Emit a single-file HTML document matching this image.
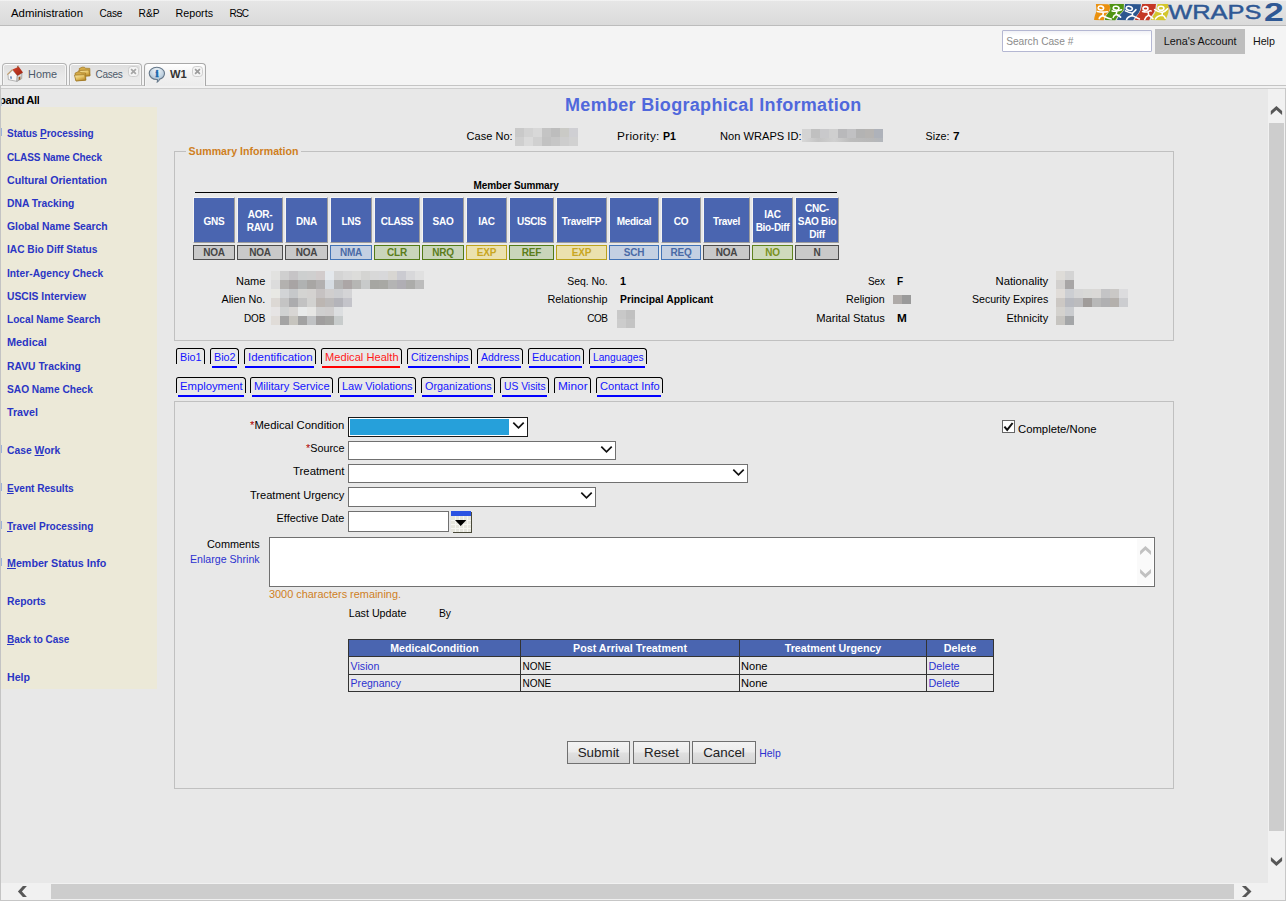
<!DOCTYPE html>
<html lang="en"><head><meta charset="utf-8"><title>Member Biographical Information</title>
<style>
html,body{margin:0;padding:0}
body{width:1286px;height:901px;overflow:hidden;background:#f4f4f4;font-family:'Liberation Sans', sans-serif;position:relative;color:#000}
.t{position:absolute;white-space:pre;line-height:16px;text-decoration:none;display:block}
.abs{position:absolute}
a{text-decoration:none}
u{text-decoration:underline;text-underline-offset:1px}
#menubar{position:absolute;left:0;top:0;width:1286px;height:25px;background:linear-gradient(#f7f7f7 0,#e6e6e6 1.5px,#e2e2e2 40%,#dadada 100%);border-bottom:1px solid #bcbcbc}
#toolbar{position:absolute;left:0;top:26px;width:1286px;height:59px;background:#f4f4f4}
.tab{position:absolute;top:63px;height:22px;border:1px solid #b4b4b4;border-bottom:none;border-radius:4px 4px 0 0;background:linear-gradient(#dedede,#e9e9e9 60%,#ececec);box-shadow:inset 0 1px 0 #fff,inset 1px 0 0 #f4f4f4,inset -1px 0 0 #f4f4f4;box-sizing:border-box}
.tab.on{background:linear-gradient(#ffffff,#f2f2f2 45%,#ececec);height:23px;border-color:#a8a8a8}
#panel{position:absolute;left:0;top:85px;width:1286px;height:816px;background:#e8e8e8;border-top:1px solid #c4c4c4;box-sizing:border-box}
#panel:before{content:"";position:absolute;left:0;top:0;width:1286px;height:2px;background:#f1f1f1;border-bottom:1px solid #cdcdcd}
#side{position:absolute;left:1px;top:107px;width:156px;height:582px;background:#ece9d8}
.hc{position:absolute;top:197px;height:46px;padding-top:2px;letter-spacing:-.3px;box-sizing:border-box;background:#4a65b0;border:1px solid;border-color:#f4f4f4 #9c9c9c #9c9c9c #f4f4f4;color:#fff;font-weight:700;font-size:10px;line-height:13px;display:flex;align-items:center;justify-content:center;text-align:center}
.sc{position:absolute;top:245px;height:15px;box-sizing:border-box;border:1px solid;font-weight:700;font-size:10px;line-height:13px;letter-spacing:-.2px;text-align:center}
.g{background:#c9c9c9;border-color:#4d4d4d;color:#454545}
.b{background:#c4d0e2;border-color:#4273b6;color:#4a6aa6}
.gr{background:#c9d5ba;border-color:#527a16;color:#5b7d1a}
.y{background:#ebe1ae;border-color:#bba21c;color:#c8a622}
.gr2{background:#cfdabc;border-color:#5f821e;color:#7a921c}
.ft{position:absolute;height:16px;box-sizing:border-box;border:1px solid #000;border-bottom:none;border-radius:2.5px 3.5px 0 0}
.ft i{position:absolute;left:1px;right:1px;top:17px;height:2px;background:#0000ff;display:block}
.ft.red i{background:#ff0000}
.sel{position:absolute;box-sizing:border-box;background:#fff;border:1px solid #707070;margin:0;padding:0;appearance:none;-webkit-appearance:none;border-radius:0;outline:none}
.btn{position:absolute;top:741px;height:23px;box-sizing:border-box;border:1px solid #707070;background:linear-gradient(#f3f3f3,#ececec 45%,#dfdfdf 55%,#d6d6d6);font-family:'Liberation Sans', sans-serif;font-size:13.4px;color:#222;padding:0;margin:0;border-radius:0;text-align:center}
</style></head>
<body>
<div id="menubar"></div>
<svg class="abs" style="left:1090px;top:0" width="196" height="25" viewBox="0 0 196 25">
<g>
<path d="M5.9 4.1 L17.6 4.2 Q20.4 4.5 20.1 7.4 Q19.8 10 18.7 11.7 Q15.8 14.5 14.8 16.3 L13.7 20.3 L4.1 20.1 Q4.3 17.5 4.9 15.6 L6.5 10.9 Q6.2 7 5.9 4.1 Z" fill="#ea900e"/>
<path d="M19.3 4.1 L33.9 4.1 L33.7 9.7 Q32 12.5 29.2 14.8 Q26.5 17.5 25.3 20.3 L15 20.1 L15.4 16.7 Q17.5 14 19.5 11.3 Q20.5 9.5 20.3 7.4 Z" fill="#4f9412"/>
<path d="M35 4.1 L51 4.2 L50.2 9.7 Q49 13 46.7 15.6 Q44.5 18 43.1 20.3 L26.9 20.1 Q28 17 30 14.8 Q33 12 34.3 9.7 Z" fill="#2c568f"/>
<path d="M52.2 4.1 L66 4.1 L65.2 9.7 Q63.8 13 61.7 15.6 Q60 18 59.2 20.3 L45 20.1 Q45.8 17.6 47.3 15.6 Q49.6 12.6 50.8 9.7 Z" fill="#c53825"/>
<path d="M67.5 4.1 L78 4.1 Q79.3 5.5 79 7.8 L78.4 12.8 Q77 17 75.3 20.3 L60.9 20.1 Q61.8 17.6 63.3 15.6 Q65.4 12.6 66.4 9.7 Z" fill="#d4c62c"/>
</g>
<g fill="none" stroke="#fff" stroke-width="1.6" stroke-linecap="round" stroke-linejoin="round">
<ellipse cx="10.9" cy="8" rx="2.7" ry="1.9" transform="rotate(12 10.9 8)"/><path d="M7.4 11.5 Q12 12.6 17.4 11.7 M13.3 12.1 L12.9 15.6 Q9.6 16.4 9.2 18.7 M12.9 15.6 Q15 17.3 21.2 19"/>
<ellipse cx="26.1" cy="8.2" rx="2.9" ry="1.9" transform="rotate(10 26.1 8.2)"/><path d="M22.2 10.9 Q26 11.9 31.5 9.8 M26.9 11.4 L26.1 14.4 Q23.5 15.5 23.2 17.5 M26.1 14.4 Q28.5 15 30.6 17.1"/>
<ellipse cx="39.3" cy="8.4" rx="3.1" ry="2" transform="rotate(14 39.3 8.4)"/><path d="M35.4 10.9 Q39 12.8 42.4 13.2 Q44.5 11.5 45.9 9.7 M42.4 13.2 L42.4 15.6 Q37.5 16.8 36.6 19.4 M42.4 15.6 Q45 17 49.4 19"/>
<ellipse cx="55.5" cy="8.4" rx="2.5" ry="1.8"/><path d="M52.6 11.5 Q56 12.4 58.2 11.7 Q60.4 10.2 61.2 11 M58.2 11.7 L58.6 15.2 Q55.6 16.6 54.7 19.4 M58.6 15.2 Q60.4 16.6 62.9 18.7"/>
<ellipse cx="71" cy="8.2" rx="2.9" ry="2"/><path d="M64.6 9.6 Q68.5 12.2 72.2 12.4 Q75.6 11.4 77.6 8.8 M72.2 12.4 L72.2 15.2 M65.4 19 Q67.2 15.6 72.2 15.3 Q74.6 15.8 75.3 18.3"/>
</g>
<text x="0" y="0" transform="translate(78.2 19.2) scale(1.235 1)" font-family="Liberation Sans, sans-serif" font-size="20.6" fill="#2f5894" stroke="#2f5894" stroke-width=".45">WRAPS</text>
<text x="0" y="0" transform="translate(174 20.7) scale(1.42 1)" font-family="Liberation Sans, sans-serif" font-size="25" font-weight="700" fill="#2f5894">2</text>
</svg>
<div id="toolbar"></div>
<input class="abs" type="text" aria-label="Search Case #" style="left:1002px;top:30px;width:150px;height:22px;box-sizing:border-box;border:1px solid #b4b7d2;background:linear-gradient(#f1f2f6,#fff 5px);padding:0;margin:0;border-radius:1px">
<div class="abs" style="left:1155px;top:29px;width:90px;height:25px;background:#bebebe"></div>
<div id="panel"></div>
<div class="tab" style="left:2px;width:65px"></div>
<div class="tab" style="left:69px;width:73px"></div>
<div class="tab on" style="left:144px;width:62px"></div>
<svg class="abs" style="left:6px;top:65px" width="18" height="18" viewBox="6 65 18 18">
<defs><linearGradient id="rf" x1="0" y1="0" x2="1" y2="1"><stop offset="0" stop-color="#d2432c"/><stop offset="1" stop-color="#9c2412"/></linearGradient></defs>
<path d="M8 74.6 L12.5 69.9 L17.3 75.6 L16.9 81.4 L8.4 79.6 Z" fill="#f7f7f7" stroke="#9a9a9a" stroke-width=".7"/>
<path d="M17.3 75.6 L21.9 73 L21.7 78.6 L16.9 81.4 Z" fill="#dcdcdc" stroke="#8e8e8e" stroke-width=".7"/>
<path d="M18.6 77.2 L20.4 76.2 L20.4 79.2 L18.6 80.3 Z" fill="#9a5a22"/>
<path d="M10 76.2 L12 76.6 L12 79 L10 78.5 Z" fill="#7f9cc4"/>
<path d="M12.4 69.6 L18.8 66.8 L23 72.4 L17.4 75.8 Z" fill="url(#rf)"/>
<path d="M7.3 74.7 L12.4 69.6" stroke="#c09a68" stroke-width="1.1" fill="none"/>
<path d="M17.2 66 L18.4 65.6 L18.6 67.6 L17.3 68.1 Z" fill="#9a5030"/>
</svg>
<svg class="abs" style="left:73px;top:66px" width="19" height="16" viewBox="73 66 19 16">
<defs><linearGradient id="fg" x1="0" y1="0" x2=".6" y2="1"><stop offset="0" stop-color="#faecb4"/><stop offset=".55" stop-color="#e6c466"/><stop offset="1" stop-color="#b88a2a"/></linearGradient></defs>
<g stroke="#9c7420" stroke-width=".7" stroke-linejoin="round">
<path d="M79.2 68.6 L82 67.2 L84.4 67.2 L85.2 68.2 L89.8 68.4 L90 75.6 L80.2 76.4 Z" fill="#d4aa48"/>
<path d="M78.6 70.6 L88.8 70 L90 75.8 L80.2 76.6 Z" fill="url(#fg)"/>
<path d="M75 73.2 L77.8 71.8 L80.2 71.8 L81 72.8 L85.6 73 L85.8 80 L76 80.8 Z" fill="#d4aa48"/>
<path d="M74.4 75.2 L84.6 74.6 L85.8 80.2 L76 81 Z" fill="url(#fg)"/>
</g>
</svg>
<svg class="abs" style="left:147px;top:65px" width="20" height="19" viewBox="0 0 20 19">
<defs><radialGradient id="ig" cx=".5" cy=".25" r=".75"><stop offset="0" stop-color="#f4f8fb"/><stop offset="1" stop-color="#9bb6cc"/></radialGradient></defs>
<path d="M9.8 2.3 C14.2 2.3 17.5 5 17.5 8.3 C17.5 11 15.5 13.3 12.7 14.1 C12.3 15.3 11.5 16.3 10.3 16.9 C10.5 16.1 10.5 15.3 10.3 14.5 C5.5 14.7 2.2 11.7 2.2 8.3 C2.2 5 5.4 2.3 9.8 2.3 Z" fill="url(#ig)" stroke="#66788a" stroke-width="1.1"/>
<text x="9.9" y="12.1" text-anchor="middle" font-family="Liberation Serif, serif" font-weight="700" font-size="10.5" fill="#1b66ad" stroke="#1b66ad" stroke-width=".7">i</text>
</svg>
<svg class="abs" style="left:128px;top:66px" width="11" height="11" viewBox="0 0 11 11"><rect x=".5" y=".5" width="10" height="10" rx="3" fill="#f4f4f4" stroke="#cacaca" stroke-width=".9"/><path d="M3.1 3.1 L7.9 7.9 M7.9 3.1 L3.1 7.9" stroke="#a6a6a6" stroke-width="1.7"/></svg>
<svg class="abs" style="left:192px;top:66px" width="11" height="11" viewBox="0 0 11 11"><rect x=".5" y=".5" width="10" height="10" rx="3" fill="#f4f4f4" stroke="#cacaca" stroke-width=".9"/><path d="M3.1 3.1 L7.9 7.9 M7.9 3.1 L3.1 7.9" stroke="#9c9c9c" stroke-width="1.7"/></svg>
<div id="side"></div>
<div class="abs" style="left:1px;top:128px;width:1px;height:8px;background:#9db2d8"></div>
<div class="abs" style="left:1px;top:445px;width:1px;height:8px;background:#9db2d8"></div>
<div class="abs" style="left:1px;top:483px;width:1px;height:8px;background:#9db2d8"></div>
<div class="abs" style="left:1px;top:521px;width:1px;height:8px;background:#9db2d8"></div>
<div class="abs" style="left:1px;top:558px;width:1px;height:8px;background:#9db2d8"></div>
<svg class="abs" style="left:515px;top:128px" width="63" height="18" viewBox="0 0 63 18" shape-rendering="crispEdges"><rect x="0" y="0" width="9" height="9" fill="#c9c9c9"/><rect x="9" y="0" width="9" height="9" fill="#d2d2d2"/><rect x="18" y="0" width="9" height="9" fill="#d8d8d8"/><rect x="27" y="0" width="9" height="9" fill="#c4c4c4"/><rect x="36" y="0" width="9" height="9" fill="#bdbdbd"/><rect x="45" y="0" width="9" height="9" fill="#cacac6"/><rect x="54" y="0" width="9" height="9" fill="#cfcfd3"/><rect x="0" y="9" width="9" height="9" fill="#cfcfcf"/><rect x="9" y="9" width="9" height="9" fill="#dadada"/><rect x="18" y="9" width="9" height="9" fill="#d0d0d0"/><rect x="27" y="9" width="9" height="9" fill="#c2c2c2"/><rect x="36" y="9" width="9" height="9" fill="#c6c6c6"/><rect x="45" y="9" width="9" height="9" fill="#cdcdcd"/><rect x="54" y="9" width="9" height="9" fill="#d1d1d1"/></svg>
<svg class="abs" style="left:802px;top:129px" width="81" height="9" viewBox="0 0 81 9" shape-rendering="crispEdges"><rect x="0" y="0" width="9" height="9" fill="#d3d3d3"/><rect x="9" y="0" width="9" height="9" fill="#c0c0c0"/><rect x="18" y="0" width="9" height="9" fill="#c9c9cb"/><rect x="27" y="0" width="9" height="9" fill="#cfcfcf"/><rect x="36" y="0" width="9" height="9" fill="#b9b9bb"/><rect x="45" y="0" width="9" height="9" fill="#c1c1c3"/><rect x="54" y="0" width="9" height="9" fill="#b3b3b3"/><rect x="63" y="0" width="9" height="9" fill="#b6b4b2"/><rect x="72" y="0" width="9" height="9" fill="#aeb2ba"/></svg>
<div class="abs" style="left:802px;top:138px;width:81px;height:4px;background:linear-gradient(90deg,#d8d8d8,#c4c4c4 20%,#d0d0d0 40%,#bcbcbc 60%,#b8b8b8 85%,#b2b6bc)"></div>
<div class="abs" style="left:174px;top:151px;width:1000px;height:190px;box-sizing:border-box;border:1px solid #c0c0c0"></div>
<div class="abs" style="left:186px;top:148px;width:115px;height:8px;background:#e8e8e8"></div>
<div class="abs" style="left:195px;top:192px;width:642px;height:1px;background:#000"></div>
<div class="hc" style="left:193px;width:42px"><span>GNS</span></div>
<div class="sc g" style="left:193px;width:42px">NOA</div>
<div class="hc" style="left:237px;width:46px"><span>AOR-<br>RAVU</span></div>
<div class="sc g" style="left:237px;width:46px">NOA</div>
<div class="hc" style="left:285px;width:43px"><span>DNA</span></div>
<div class="sc g" style="left:285px;width:43px">NOA</div>
<div class="hc" style="left:330px;width:42px"><span>LNS</span></div>
<div class="sc b" style="left:330px;width:42px">NMA</div>
<div class="hc" style="left:374px;width:46px"><span>CLASS</span></div>
<div class="sc gr" style="left:374px;width:46px">CLR</div>
<div class="hc" style="left:422px;width:42px"><span>SAO</span></div>
<div class="sc gr" style="left:422px;width:42px">NRQ</div>
<div class="hc" style="left:466px;width:41px"><span>IAC</span></div>
<div class="sc y" style="left:466px;width:41px">EXP</div>
<div class="hc" style="left:509px;width:45px"><span>USCIS</span></div>
<div class="sc gr" style="left:509px;width:45px">REF</div>
<div class="hc" style="left:556px;width:51px"><span>TravelFP</span></div>
<div class="sc y" style="left:556px;width:51px">EXP</div>
<div class="hc" style="left:609px;width:50px"><span>Medical</span></div>
<div class="sc b" style="left:609px;width:50px">SCH</div>
<div class="hc" style="left:661px;width:40px"><span>CO</span></div>
<div class="sc b" style="left:661px;width:40px">REQ</div>
<div class="hc" style="left:703px;width:47px"><span>Travel</span></div>
<div class="sc g" style="left:703px;width:47px">NOA</div>
<div class="hc" style="left:752px;width:41px"><span>IAC<br>Bio-Diff</span></div>
<div class="sc gr2" style="left:752px;width:41px">NO</div>
<div class="hc" style="left:795px;width:44px"><span>CNC-<br>SAO Bio<br>Diff</span></div>
<div class="sc g" style="left:795px;width:44px">N</div>
<svg class="abs" style="left:271px;top:271px" width="153" height="18" viewBox="0 0 153 18" shape-rendering="crispEdges"><rect x="0" y="0" width="9" height="9" fill="#e2e2e0"/><rect x="9" y="0" width="9" height="9" fill="#cfcfcf"/><rect x="18" y="0" width="9" height="9" fill="#c6c4c6"/><rect x="27" y="0" width="9" height="9" fill="#cdcfcf"/><rect x="36" y="0" width="9" height="9" fill="#cfcfcf"/><rect x="45" y="0" width="9" height="9" fill="#d2cccc"/><rect x="54" y="0" width="9" height="9" fill="#e4e8ec"/><rect x="63" y="0" width="9" height="9" fill="#d4d4d4"/><rect x="72" y="0" width="9" height="9" fill="#d9d9d9"/><rect x="81" y="0" width="9" height="9" fill="#dcdcda"/><rect x="90" y="0" width="9" height="9" fill="#d4d4d2"/><rect x="99" y="0" width="9" height="9" fill="#d8d8d8"/><rect x="108" y="0" width="9" height="9" fill="#d8d8da"/><rect x="117" y="0" width="9" height="9" fill="#d8d6d2"/><rect x="126" y="0" width="9" height="9" fill="#cbcbd1"/><rect x="135" y="0" width="9" height="9" fill="#d8d8da"/><rect x="144" y="0" width="9" height="9" fill="#e0e0e0"/><rect x="0" y="9" width="9" height="9" fill="#dcdcdc"/><rect x="9" y="9" width="9" height="9" fill="#b3b1af"/><rect x="18" y="9" width="9" height="9" fill="#a8a4a4"/><rect x="27" y="9" width="9" height="9" fill="#b0b2b2"/><rect x="36" y="9" width="9" height="9" fill="#a8a6a4"/><rect x="45" y="9" width="9" height="9" fill="#b2b0b0"/><rect x="54" y="9" width="9" height="9" fill="#d6dce2"/><rect x="63" y="9" width="9" height="9" fill="#b4b4b4"/><rect x="72" y="9" width="9" height="9" fill="#aca6a6"/><rect x="81" y="9" width="9" height="9" fill="#b6b6b4"/><rect x="90" y="9" width="9" height="9" fill="#c8caca"/><rect x="99" y="9" width="9" height="9" fill="#a6a6a2"/><rect x="108" y="9" width="9" height="9" fill="#a8a8a4"/><rect x="117" y="9" width="9" height="9" fill="#b4b4b4"/><rect x="126" y="9" width="9" height="9" fill="#b0aeb4"/><rect x="135" y="9" width="9" height="9" fill="#acacaa"/><rect x="144" y="9" width="9" height="9" fill="#bcbcbc"/></svg>
<svg class="abs" style="left:271px;top:289px" width="81" height="18" viewBox="0 0 81 18" shape-rendering="crispEdges"><rect x="0" y="0" width="9" height="9" fill="#e8e8e4"/><rect x="9" y="0" width="9" height="9" fill="#d2d4d6"/><rect x="18" y="0" width="9" height="9" fill="#c6c8ca"/><rect x="27" y="0" width="9" height="9" fill="#d4d4d2"/><rect x="36" y="0" width="9" height="9" fill="#d4d2d0"/><rect x="45" y="0" width="9" height="9" fill="#c6c2c2"/><rect x="54" y="0" width="9" height="9" fill="#d0cece"/><rect x="63" y="0" width="9" height="9" fill="#cccdd0"/><rect x="72" y="0" width="9" height="9" fill="#d4d4d6"/><rect x="0" y="9" width="9" height="9" fill="#dcd8d4"/><rect x="9" y="9" width="9" height="9" fill="#c4c4c4"/><rect x="18" y="9" width="9" height="9" fill="#acacae"/><rect x="27" y="9" width="9" height="9" fill="#c2c2c2"/><rect x="36" y="9" width="9" height="9" fill="#d2d2d0"/><rect x="45" y="9" width="9" height="9" fill="#bcb6b2"/><rect x="54" y="9" width="9" height="9" fill="#bcbaba"/><rect x="63" y="9" width="9" height="9" fill="#b4b4ba"/><rect x="72" y="9" width="9" height="9" fill="#c4c4ca"/></svg>
<svg class="abs" style="left:271px;top:307px" width="72" height="18" viewBox="0 0 72 18" shape-rendering="crispEdges"><rect x="0" y="0" width="9" height="9" fill="#e6e4e4"/><rect x="9" y="0" width="9" height="9" fill="#d0d2d2"/><rect x="18" y="0" width="9" height="9" fill="#d8d6d4"/><rect x="27" y="0" width="9" height="9" fill="#e8eaea"/><rect x="36" y="0" width="9" height="9" fill="#e6e6e4"/><rect x="45" y="0" width="9" height="9" fill="#cfcfcf"/><rect x="54" y="0" width="9" height="9" fill="#cfcdcd"/><rect x="63" y="0" width="9" height="9" fill="#dcdee0"/><rect x="0" y="9" width="9" height="9" fill="#e0dcd8"/><rect x="9" y="9" width="9" height="9" fill="#a4a4a4"/><rect x="18" y="9" width="9" height="9" fill="#c6c4be"/><rect x="27" y="9" width="9" height="9" fill="#a2a2a2"/><rect x="36" y="9" width="9" height="9" fill="#c0c2c4"/><rect x="45" y="9" width="9" height="9" fill="#a09e9e"/><rect x="54" y="9" width="9" height="9" fill="#a4a4a2"/><rect x="63" y="9" width="9" height="9" fill="#c8cccc"/></svg>
<svg class="abs" style="left:617px;top:310px" width="18" height="18" viewBox="0 0 18 18" shape-rendering="crispEdges"><rect x="0" y="0" width="9" height="9" fill="#c8c8c8"/><rect x="9" y="0" width="9" height="9" fill="#c0c0c0"/><rect x="0" y="9" width="9" height="9" fill="#cccccc"/><rect x="9" y="9" width="9" height="9" fill="#c4c4c4"/></svg>
<div class="abs" style="left:893px;top:295px;width:18px;height:9px;background:linear-gradient(90deg,#aeaaa8 50%,#9a9a9a 50%)"></div>
<svg class="abs" style="left:1056px;top:271px" width="18" height="54" viewBox="0 0 18 54" shape-rendering="crispEdges"><rect x="0" y="0" width="9" height="9" fill="#dedcd8"/><rect x="9" y="0" width="9" height="9" fill="#d4d4d4"/><rect x="0" y="9" width="9" height="9" fill="#d2d0ce"/><rect x="9" y="9" width="9" height="9" fill="#a8a6a6"/><rect x="0" y="18" width="9" height="9" fill="#e0dcd8"/><rect x="9" y="18" width="9" height="9" fill="#ccced2"/><rect x="0" y="27" width="9" height="9" fill="#ccc8c4"/><rect x="9" y="27" width="9" height="9" fill="#b8bac0"/><rect x="0" y="36" width="9" height="9" fill="#d4d2ce"/><rect x="9" y="36" width="9" height="9" fill="#cacccf"/><rect x="0" y="45" width="9" height="9" fill="#c6c4c0"/><rect x="9" y="45" width="9" height="9" fill="#a4a6a8"/></svg>
<svg class="abs" style="left:1074px;top:289px" width="54" height="18" viewBox="0 0 54 18" shape-rendering="crispEdges"><rect x="0" y="0" width="9" height="9" fill="#d6d6d6"/><rect x="9" y="0" width="9" height="9" fill="#d8d8d6"/><rect x="18" y="0" width="9" height="9" fill="#dad8d6"/><rect x="27" y="0" width="9" height="9" fill="#c4c4c6"/><rect x="36" y="0" width="9" height="9" fill="#cac8c6"/><rect x="45" y="0" width="9" height="9" fill="#dcdcde"/><rect x="0" y="9" width="9" height="9" fill="#bcbcbe"/><rect x="9" y="9" width="9" height="9" fill="#a09c9a"/><rect x="18" y="9" width="9" height="9" fill="#b8b8b8"/><rect x="27" y="9" width="9" height="9" fill="#b0b0b2"/><rect x="36" y="9" width="9" height="9" fill="#b4b0ac"/><rect x="45" y="9" width="9" height="9" fill="#cccdd0"/></svg>
<div class="ft" style="left:176px;top:348px;width:29px"></div>
<div class="ft" style="left:210px;top:348px;width:29px"><i style="left:1px;width:25px;right:auto"></i></div>
<div class="ft" style="left:244px;top:348px;width:72px"><i style="left:0px;width:69px;right:auto"></i></div>
<div class="ft red" style="left:321px;top:348px;width:81px"><i style="left:0px;width:78px;right:auto"></i></div>
<div class="ft" style="left:407px;top:348px;width:65px"><i style="left:0px;width:62px;right:auto"></i></div>
<div class="ft" style="left:477px;top:348px;width:46px"><i style="left:0px;width:43px;right:auto"></i></div>
<div class="ft" style="left:528px;top:348px;width:56px"><i style="left:0px;width:53px;right:auto"></i></div>
<div class="ft" style="left:589px;top:348px;width:58px"><i style="left:0px;width:55px;right:auto"></i></div>
<div class="ft" style="left:176px;top:377px;width:70px"><i style="left:1px;width:66px;right:auto"></i></div>
<div class="ft" style="left:250px;top:377px;width:83px"><i style="left:1px;width:79px;right:auto"></i></div>
<div class="ft" style="left:338px;top:377px;width:78px"><i style="left:1px;width:74px;right:auto"></i></div>
<div class="ft" style="left:421px;top:377px;width:74px"><i style="left:0px;width:71px;right:auto"></i></div>
<div class="ft" style="left:500px;top:377px;width:49px"><i style="left:1px;width:45px;right:auto"></i></div>
<div class="ft" style="left:554px;top:377px;width:37px"></div>
<div class="ft" style="left:596px;top:377px;width:67px"><i style="left:0px;width:64px;right:auto"></i></div>
<div class="abs" style="left:174px;top:401px;width:1000px;height:388px;box-sizing:border-box;border:1px solid #c0c0c0"></div>
<select class="sel" aria-label="Medical Condition" style="left:348px;top:417px;width:180px;height:20px;border-color:#1a1a1a"><option></option></select>
<div class="abs" style="left:350px;top:419px;width:159px;height:16px;background:#26a0da"></div>
<svg class="abs" style="left:512px;top:422px" width="13" height="9" viewBox="0 0 13 9"><path d="M1.3 .7 L6.5 5.9 L11.7 .7" fill="none" stroke="#111" stroke-width="1.7"/></svg>
<select class="sel" aria-label="Source" style="left:348px;top:441px;width:268px;height:19px"><option></option></select>
<svg class="abs" style="left:600px;top:446px" width="13" height="9" viewBox="0 0 13 9"><path d="M1.3 .7 L6.5 5.9 L11.7 .7" fill="none" stroke="#111" stroke-width="1.7"/></svg>
<select class="sel" aria-label="Treatment" style="left:348px;top:464px;width:400px;height:19px"><option></option></select>
<svg class="abs" style="left:732px;top:469px" width="13" height="9" viewBox="0 0 13 9"><path d="M1.3 .7 L6.5 5.9 L11.7 .7" fill="none" stroke="#111" stroke-width="1.7"/></svg>
<select class="sel" aria-label="Treatment Urgency" style="left:348px;top:487px;width:248px;height:20px"><option></option></select>
<svg class="abs" style="left:580px;top:492px" width="13" height="9" viewBox="0 0 13 9"><path d="M1.3 .7 L6.5 5.9 L11.7 .7" fill="none" stroke="#111" stroke-width="1.7"/></svg>
<input class="sel" type="text" aria-label="Effective Date" style="left:348px;top:511px;width:101px;height:21px">
<svg class="abs" style="left:451px;top:511px" width="21" height="22" viewBox="0 0 21 22" shape-rendering="crispEdges">
<rect x="0" y="0" width="20" height="21" fill="#e6e6de"/>
<rect x="0" y="0" width="20" height="5" fill="#2a52e2"/>
<path d="M0 9.5H20 M0 13.5H20 M0 17.5H20 M4.5 5V21 M8.5 5V21 M12.5 5V21 M16.5 5V21" stroke="#f6f6f2" stroke-width="1"/>
<path d="M20.5 1V22 M2 21.5H21" stroke="#4a4a3a" stroke-width="1"/>
<path d="M4 9 L15.4 9 L9.7 15 Z" fill="#000" shape-rendering="auto"/>
</svg>
<svg class="abs" style="left:1002px;top:420px" width="13" height="13" viewBox="0 0 13 13"><rect x=".5" y=".5" width="12" height="12" fill="#fff" stroke="#666"/><path d="M2.4 6.6 L5.2 9.9 L10.6 3" fill="none" stroke="#111" stroke-width="2"/></svg>
<textarea class="sel" aria-label="Comments" style="left:269px;top:537px;width:886px;height:50px;resize:none;overflow:hidden"></textarea>
<div class="abs" style="left:1137px;top:539px;width:16px;height:46px;background:#fafafa"></div>
<svg class="abs" style="left:1139px;top:545px" width="13" height="11" viewBox="0 0 13 11"><polygon points="1.10,9.90 1.10,5.90 6.40,1.00 12.00,5.90 12.00,9.90 6.40,5.00" fill="#c1c1c1"/></svg>
<svg class="abs" style="left:1139px;top:568px" width="13" height="11" viewBox="0 0 13 11"><polygon points="1.10,1.00 6.40,6.00 12.00,1.00 12.00,5.00 6.40,10.00 1.10,5.00" fill="#c1c1c1"/></svg>
<div class="abs" style="left:348px;top:639px;width:646px;height:18px;background:#4a65b0"></div>
<div class="abs" style="left:348px;top:639px;width:646px;height:1px;background:#333"></div>
<div class="abs" style="left:348px;top:656px;width:646px;height:1px;background:#333"></div>
<div class="abs" style="left:348px;top:674px;width:646px;height:1px;background:#333"></div>
<div class="abs" style="left:348px;top:691px;width:646px;height:1px;background:#333"></div>
<div class="abs" style="left:348px;top:639px;width:1px;height:53px;background:#333"></div>
<div class="abs" style="left:520px;top:639px;width:1px;height:53px;background:#333"></div>
<div class="abs" style="left:739px;top:639px;width:1px;height:53px;background:#333"></div>
<div class="abs" style="left:926px;top:639px;width:1px;height:53px;background:#333"></div>
<div class="abs" style="left:993px;top:639px;width:1px;height:53px;background:#333"></div>
<button class="btn" style="left:567px;width:63px">Submit</button>
<button class="btn" style="left:633px;width:57px">Reset</button>
<button class="btn" style="left:692px;width:64px">Cancel</button>
<div class="abs" style="left:1268px;top:89px;width:17px;height:794px;background:#f1f1f1"></div>
<div class="abs" style="left:1269px;top:123px;width:15px;height:708px;background:#cdcdcd"></div>
<div class="abs" style="left:1px;top:883px;width:1284px;height:17px;background:#f1f1f1"></div>
<div class="abs" style="left:51px;top:884px;width:1183px;height:15px;background:#cdcdcd"></div>
<svg class="abs" style="left:1269px;top:104px" width="15" height="13" viewBox="0 0 15 13"><polygon points="1.80,11.00 1.80,7.00 7.40,1.90 13.10,7.00 13.10,11.00 7.40,5.90" fill="#575757"/></svg>
<svg class="abs" style="left:1269px;top:855px" width="15" height="13" viewBox="0 0 15 13"><polygon points="1.90,1.90 7.40,7.00 13.10,1.90 13.10,5.90 7.40,11.00 1.90,5.90" fill="#575757"/></svg>
<svg class="abs" style="left:16px;top:884px" width="13" height="15" viewBox="0 0 13 15"><polygon points="10.90,2.00 6.90,2.00 1.90,7.50 6.90,13.00 10.90,13.00 5.90,7.50" fill="#575757"/></svg>
<svg class="abs" style="left:1240px;top:884px" width="13" height="15" viewBox="0 0 13 15"><polygon points="1.90,2.00 5.90,2.00 11.50,7.50 5.90,13.00 1.90,13.00 7.50,7.50" fill="#575757"/></svg>
<div class="abs" style="left:0;top:86px;width:1px;height:815px;background:#c4c4c4"></div>
<div class="abs" style="left:1285px;top:88px;width:1px;height:813px;background:#c8c8c8"></div>
<div class="abs" style="left:0;top:900px;width:1286px;height:1px;background:#c6c6c6"></div>
<a href="#" class="t" style="left:11.00px;top:5px;font-size:11.4px;font-weight:400;color:#000;letter-spacing:-0.012px;">Administration</a>
<a href="#" class="t" style="left:99.60px;top:6px;font-size:10.0px;font-weight:400;color:#000;letter-spacing:-0.240px;">Case</a>
<a href="#" class="t" style="left:138.60px;top:6px;font-size:10.2px;font-weight:400;color:#000;letter-spacing:0.016px;">R&amp;P</a>
<a href="#" class="t" style="left:175.60px;top:5px;font-size:10.7px;font-weight:400;color:#000;letter-spacing:-0.005px;">Reports</a>
<a href="#" class="t" style="left:229.60px;top:6px;font-size:10.0px;font-weight:400;color:#000;letter-spacing:-0.908px;">RSC</a>
<span class="t" style="left:1006.20px;top:34px;font-size:10.2px;font-weight:400;color:#8c8c8c;letter-spacing:-0.022px;">Search Case #</span>
<a href="#" class="t" style="left:1163.70px;top:33px;font-size:10.8px;font-weight:400;color:#111;letter-spacing:-0.008px;">Lena&#x27;s Account</a>
<a href="#" class="t" style="left:1252.90px;top:33px;font-size:10.7px;font-weight:400;color:#111;letter-spacing:0.029px;">Help</a>
<span class="t" style="left:28.00px;top:66px;font-size:10.9px;font-weight:400;color:#4d5a6a;letter-spacing:0.034px;">Home</span>
<span class="t" style="left:95.60px;top:67px;font-size:10.0px;font-weight:400;color:#4d5a6a;letter-spacing:-0.292px;">Cases</span>
<span class="t" style="left:170.00px;top:66px;font-size:11.2px;font-weight:700;color:#333;letter-spacing:0.009px;">W1</span>
<span class="t" style="left:-13.81px;top:92px;font-size:11.2px;font-weight:700;color:#000;letter-spacing:-0.420px;clip-path:inset(0 0 0 15.41px);">Expand All</span>
<a href="#" class="t" style="left:7.00px;top:126px;font-size:10.0px;font-weight:700;color:#2a35c4;letter-spacing:-0.039px;">Status <u>P</u>rocessing</a>
<a href="#" class="t" style="left:7.00px;top:150px;font-size:10.0px;font-weight:700;color:#2a35c4;letter-spacing:-0.113px;">CLASS Name Check</a>
<a href="#" class="t" style="left:7.00px;top:172px;font-size:10.7px;font-weight:700;color:#2a35c4;letter-spacing:-0.018px;">Cultural Orientation</a>
<a href="#" class="t" style="left:7.00px;top:196px;font-size:10.3px;font-weight:700;color:#2a35c4;letter-spacing:0.013px;">DNA Tracking</a>
<a href="#" class="t" style="left:7.00px;top:219px;font-size:10.4px;font-weight:700;color:#2a35c4;letter-spacing:-0.020px;">Global Name Search</a>
<a href="#" class="t" style="left:7.00px;top:242px;font-size:10.2px;font-weight:700;color:#2a35c4;letter-spacing:-0.009px;">IAC Bio Diff Status</a>
<a href="#" class="t" style="left:7.00px;top:266px;font-size:10.2px;font-weight:700;color:#2a35c4;letter-spacing:0.028px;">Inter-Agency Check</a>
<a href="#" class="t" style="left:7.00px;top:289px;font-size:10.3px;font-weight:700;color:#2a35c4;">USCIS Interview</a>
<a href="#" class="t" style="left:7.00px;top:312px;font-size:10.1px;font-weight:700;color:#2a35c4;letter-spacing:0.021px;">Local Name Search</a>
<a href="#" class="t" style="left:7.00px;top:334px;font-size:10.9px;font-weight:700;color:#2a35c4;letter-spacing:-0.022px;">Medical</a>
<a href="#" class="t" style="left:7.00px;top:359px;font-size:10.3px;font-weight:700;color:#2a35c4;letter-spacing:0.021px;">RAVU Tracking</a>
<a href="#" class="t" style="left:7.00px;top:382px;font-size:10.2px;font-weight:700;color:#2a35c4;letter-spacing:-0.012px;">SAO Name Check</a>
<a href="#" class="t" style="left:7.00px;top:404px;font-size:10.7px;font-weight:700;color:#2a35c4;">Travel</a>
<a href="#" class="t" style="left:7.00px;top:443px;font-size:10.3px;font-weight:700;color:#2a35c4;letter-spacing:0.017px;">Case <u>W</u>ork</a>
<a href="#" class="t" style="left:7.00px;top:481px;font-size:10.1px;font-weight:700;color:#2a35c4;letter-spacing:-0.013px;"><u>E</u>vent Results</a>
<a href="#" class="t" style="left:7.00px;top:519px;font-size:10.1px;font-weight:700;color:#2a35c4;letter-spacing:-0.006px;"><u>T</u>ravel Processing</a>
<a href="#" class="t" style="left:7.00px;top:555px;font-size:10.7px;font-weight:700;color:#2a35c4;letter-spacing:0.007px;"><u>M</u>ember Status Info</a>
<a href="#" class="t" style="left:7.00px;top:594px;font-size:10.3px;font-weight:700;color:#2a35c4;letter-spacing:-0.015px;">Reports</a>
<a href="#" class="t" style="left:7.00px;top:632px;font-size:10.0px;font-weight:700;color:#2a35c4;letter-spacing:-0.051px;"><u>B</u>ack to Case</a>
<a href="#" class="t" style="left:7.00px;top:669px;font-size:10.6px;font-weight:700;color:#2a35c4;letter-spacing:0.008px;">Help</a>
<h1 class="t" style="left:565.00px;top:97px;font-size:18px;font-weight:700;color:#5068dc;letter-spacing:0.311px;margin:0;">Member Biographical Information</h1>
<span class="t" style="left:466.60px;top:128px;font-size:11.0px;font-weight:400;color:#000;letter-spacing:0.018px;">Case No:</span>
<span class="t" style="left:617.00px;top:128px;font-size:11.8px;font-weight:400;color:#000;letter-spacing:0.302px;">Priority:</span>
<span class="t" style="left:663.00px;top:128px;font-size:10.6px;font-weight:700;color:#000;letter-spacing:0.016px;">P1</span>
<span class="t" style="left:720.00px;top:128px;font-size:11.1px;font-weight:400;color:#000;letter-spacing:0.010px;">Non WRAPS ID:</span>
<span class="t" style="left:925.60px;top:128px;font-size:10.7px;font-weight:400;color:#000;letter-spacing:0.027px;">Size:</span>
<span class="t" style="left:953.00px;top:128px;font-size:11.8px;font-weight:700;color:#000;letter-spacing:0.038px;">7</span>
<span class="t" style="left:188.60px;top:143px;font-size:10.6px;font-weight:700;color:#cf7f1e;letter-spacing:0.026px;">Summary Information</span>
<span class="t" style="left:473.50px;top:178px;font-size:10.0px;font-weight:700;color:#000;letter-spacing:-0.100px;">Member Summary</span>
<span class="t" style="left:236.00px;top:273px;font-size:11.0px;font-weight:400;color:#000;letter-spacing:-0.011px;">Name</span>
<span class="t" style="left:221.50px;top:291px;font-size:10.8px;font-weight:400;color:#000;">Alien No.</span>
<span class="t" style="left:244.00px;top:311px;font-size:10.0px;font-weight:400;color:#000;letter-spacing:-0.124px;">DOB</span>
<span class="t" style="left:567.30px;top:274px;font-size:10.4px;font-weight:400;color:#000;letter-spacing:-0.017px;">Seq. No.</span>
<span class="t" style="left:547.40px;top:291px;font-size:10.9px;font-weight:400;color:#000;letter-spacing:0.022px;">Relationship</span>
<span class="t" style="left:587.20px;top:311px;font-size:10.0px;font-weight:400;color:#000;letter-spacing:-0.424px;">COB</span>
<span class="t" style="left:620.00px;top:273px;font-size:10.8px;font-weight:700;color:#000;letter-spacing:-0.016px;">1</span>
<span class="t" style="left:620.00px;top:292px;font-size:10.3px;font-weight:700;color:#000;letter-spacing:0.022px;">Principal Applicant</span>
<span class="t" style="left:868.00px;top:274px;font-size:10.0px;font-weight:400;color:#000;letter-spacing:-0.145px;">Sex</span>
<span class="t" style="left:846.00px;top:291px;font-size:10.7px;font-weight:400;color:#000;letter-spacing:0.022px;">Religion</span>
<span class="t" style="left:816.30px;top:310px;font-size:11.2px;font-weight:400;color:#000;letter-spacing:0.007px;">Marital Status</span>
<span class="t" style="left:897.00px;top:274px;font-size:10.0px;font-weight:700;color:#000;letter-spacing:-0.509px;">F</span>
<span class="t" style="left:897.00px;top:310px;font-size:11.8px;font-weight:700;color:#000;letter-spacing:0.172px;">M</span>
<span class="t" style="left:995.50px;top:273px;font-size:11.3px;font-weight:400;color:#000;letter-spacing:-0.005px;">Nationality</span>
<span class="t" style="left:972.00px;top:291px;font-size:10.6px;font-weight:400;color:#000;letter-spacing:-0.022px;">Security Expires</span>
<span class="t" style="left:1006.50px;top:310px;font-size:11.0px;font-weight:400;color:#000;letter-spacing:0.014px;">Ethnicity</span>
<a href="#" class="t" style="left:180.00px;top:349px;font-size:10.8px;font-weight:400;color:#1414ff;letter-spacing:-0.006px;">Bio1</a>
<a href="#" class="t" style="left:214.00px;top:349px;font-size:10.8px;font-weight:400;color:#1414ff;letter-spacing:-0.006px;">Bio2</a>
<a href="#" class="t" style="left:248.00px;top:349px;font-size:11.5px;font-weight:400;color:#1414ff;">Identification</a>
<a href="#" class="t" style="left:325.00px;top:349px;font-size:11.1px;font-weight:400;color:#ff1a1a;letter-spacing:0.015px;">Medical Health</a>
<a href="#" class="t" style="left:411.00px;top:349px;font-size:10.7px;font-weight:400;color:#1414ff;">Citizenships</a>
<a href="#" class="t" style="left:481.00px;top:349px;font-size:10.5px;font-weight:400;color:#1414ff;letter-spacing:0.010px;">Address</a>
<a href="#" class="t" style="left:532.00px;top:349px;font-size:10.9px;font-weight:400;color:#1414ff;letter-spacing:0.016px;">Education</a>
<a href="#" class="t" style="left:593.00px;top:350px;font-size:10.2px;font-weight:400;color:#1414ff;letter-spacing:0.020px;">Languages</a>
<a href="#" class="t" style="left:180.00px;top:378px;font-size:11.3px;font-weight:400;color:#1414ff;letter-spacing:-0.020px;">Employment</a>
<a href="#" class="t" style="left:254.00px;top:378px;font-size:11.2px;font-weight:400;color:#1414ff;letter-spacing:-0.015px;">Military Service</a>
<a href="#" class="t" style="left:342.00px;top:378px;font-size:11.0px;font-weight:400;color:#1414ff;letter-spacing:-0.010px;">Law Violations</a>
<a href="#" class="t" style="left:425.00px;top:378px;font-size:10.8px;font-weight:400;color:#1414ff;">Organizations</a>
<a href="#" class="t" style="left:504.00px;top:379px;font-size:10.3px;font-weight:400;color:#1414ff;">US Visits</a>
<a href="#" class="t" style="left:558.00px;top:378px;font-size:11.8px;font-weight:400;color:#1414ff;letter-spacing:0.020px;">Minor</a>
<a href="#" class="t" style="left:600.00px;top:378px;font-size:11.1px;font-weight:400;color:#1414ff;letter-spacing:-0.019px;">Contact Info</a>
<label class="t" style="left:250.00px;top:417px;font-size:11.3px;font-weight:400;color:#000;letter-spacing:0.011px;"><b style="color:#b00000;font-weight:400">*</b>Medical Condition</label>
<label class="t" style="left:306.00px;top:440px;font-size:10.8px;font-weight:400;color:#000;"><b style="color:#b00000;font-weight:400">*</b>Source</label>
<label class="t" style="left:293.00px;top:463px;font-size:11.4px;font-weight:400;color:#000;letter-spacing:-0.011px;">Treatment</label>
<label class="t" style="left:250.00px;top:487px;font-size:11.1px;font-weight:400;color:#000;letter-spacing:-0.009px;">Treatment Urgency</label>
<label class="t" style="left:276.50px;top:510px;font-size:10.9px;font-weight:400;color:#000;letter-spacing:0.021px;">Effective Date</label>
<label class="t" style="left:1018.00px;top:421px;font-size:11.3px;font-weight:400;color:#000;">Complete/None</label>
<label class="t" style="left:207.00px;top:536px;font-size:10.9px;font-weight:400;color:#000;letter-spacing:-0.007px;">Comments</label>
<a href="#" class="t" style="left:190.00px;top:551px;font-size:10.6px;font-weight:400;color:#2c32d0;letter-spacing:0.007px;">Enlarge Shrink</a>
<span class="t" style="left:269.00px;top:586px;font-size:10.9px;font-weight:400;color:#cf7f1e;">3000 characters remaining.</span>
<span class="t" style="left:348.70px;top:605px;font-size:10.7px;font-weight:400;color:#000;letter-spacing:0.005px;">Last Update</span>
<span class="t" style="left:439.00px;top:606px;font-size:10.3px;font-weight:400;color:#000;letter-spacing:-0.016px;">By</span>
<span class="t" style="left:390.25px;top:640px;font-size:10.6px;font-weight:700;color:#fff;letter-spacing:0.014px;">MedicalCondition</span>
<span class="t" style="left:573.00px;top:640px;font-size:10.7px;font-weight:700;color:#fff;letter-spacing:0.016px;">Post Arrival Treatment</span>
<span class="t" style="left:784.75px;top:640px;font-size:10.7px;font-weight:700;color:#fff;letter-spacing:-0.019px;">Treatment Urgency</span>
<span class="t" style="left:943.75px;top:640px;font-size:10.8px;font-weight:700;color:#fff;letter-spacing:0.013px;">Delete</span>
<a href="#" class="t" style="left:350.60px;top:658px;font-size:10.6px;font-weight:400;color:#2c32d0;letter-spacing:0.021px;">Vision</a>
<a href="#" class="t" style="left:350.60px;top:675px;font-size:10.5px;font-weight:400;color:#2c32d0;letter-spacing:0.022px;">Pregnancy</a>
<span class="t" style="left:522.50px;top:659px;font-size:10.0px;font-weight:400;color:#000;letter-spacing:-0.052px;">NONE</span>
<span class="t" style="left:741.00px;top:658px;font-size:11.1px;font-weight:400;color:#000;letter-spacing:-0.008px;">None</span>
<a href="#" class="t" style="left:928.50px;top:658px;font-size:10.8px;font-weight:400;color:#2c32d0;letter-spacing:-0.020px;">Delete</a>
<span class="t" style="left:522.50px;top:676px;font-size:10.0px;font-weight:400;color:#000;letter-spacing:-0.052px;">NONE</span>
<span class="t" style="left:741.00px;top:675px;font-size:11.1px;font-weight:400;color:#000;letter-spacing:-0.008px;">None</span>
<a href="#" class="t" style="left:928.50px;top:675px;font-size:10.8px;font-weight:400;color:#2c32d0;letter-spacing:-0.020px;">Delete</a>
<a href="#" class="t" style="left:759.20px;top:745px;font-size:10.5px;font-weight:400;color:#2c32d0;">Help</a>
</body></html>
